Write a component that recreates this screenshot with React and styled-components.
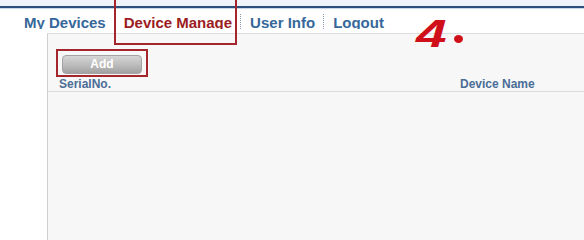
import styled, { createGlobalStyle } from 'styled-components';

const GlobalStyle = createGlobalStyle`
    html, body {
        margin: 0;
        padding: 0;
        background: #fff;
        font-family: 'Liberation Sans', Arial, sans-serif;
    }
    #root {
        height: 240px;
        overflow: hidden;
    }
`;

const Page = styled.div`
    position: relative;
    height: 240px;
    display: flex;
    flex-direction: column;
`;

const TopStrip = styled.div`
    height: 6px;
    background-color: #eef4f9;
    border-bottom: 2px solid #2c4f7e;
    box-shadow: 0 1px 0 #c9d7e5;
`;

const NavBar = styled.ul`
    list-style: none;
    margin: 6px 0 0 15px;
    padding: 0;
    display: flex;
    height: 15px;
    overflow: hidden;
`;

const NavItem = styled.li`
    padding: 0 8px 0 9px;
    font-size: 15px;
    font-weight: bold;
    line-height: 17px;
    color: ${props => (props.active ? '#9b1c22' : '#36679a')};
    border-left: ${props => (props.first ? 'none' : '1px dotted #8a9aac')};
    white-space: nowrap;
`;

const Panel = styled.div`
    flex: 1;
    margin: 4px 0 0 47px;
    background-color: #f7f7f7;
    border-left: 1px solid #cfcfcf;
    border-top: 1px solid #dedede;
`;

const Toolbar = styled.div`
    padding: 15px 0 0 8px;
    display: flex;
`;

const Highlight = styled.div`
    border: 2px solid #a4252b;
    padding: 3px 4px 1px 4px;
`;

const AddButton = styled.button`
    width: 80px;
    height: 19px;
    border: 1px solid #a3a3a3;
    border-radius: 4px;
    background: linear-gradient(#d6d6d6 0%, #bdbdbd 50%, #a2a2a2 100%);
    color: #fff;
    font-family: 'Liberation Sans', Arial, sans-serif;
    font-size: 12px;
    font-weight: bold;
    padding: 0;
    line-height: 17px;
`;

const HeaderRow = styled.div`
    display: grid;
    grid-template-columns: 401px 1fr;
    padding-left: 11px;
    height: 14px;
    border-bottom: 1px solid #dadada;
`;

const HeaderCell = styled.div`
    font-size: 12px;
    font-weight: bold;
    line-height: 14px;
    color: #4a6d96;
    white-space: nowrap;
`;

const NavMark = styled.div`
    position: absolute;
    left: 114px;
    top: -2px;
    width: 119px;
    height: 43px;
    border: 2px solid #a4252b;
`;

const StepLabel = styled.div`
    position: absolute;
    left: 416px;
    top: 15px;
    display: flex;
    align-items: flex-end;
`;

const StepDigit = styled.span`
    display: inline-block;
    font-family: 'Liberation Sans', Arial, sans-serif;
    font-size: 38px;
    font-weight: bold;
    font-style: italic;
    line-height: 38px;
    color: #cf1019;
    transform: scaleX(1.45);
    transform-origin: left center;
    margin-right: 17px;
`;

const StepDot = styled.span`
    width: 9px;
    height: 8px;
    border-radius: 50%;
    background-color: #cf1019;
    margin-bottom: 10px;
`;

const App = () => {
    const tabs = ['My Devices', 'Device Manage', 'User Info', 'Logout'];

    return (
        <Page>
            <GlobalStyle />
            <TopStrip />
            <NavBar>
                {tabs.map((tab, i) => (
                    <NavItem key={tab} first={i === 0} active={tab === 'Device Manage'}>
                        {tab}
                    </NavItem>
                ))}
            </NavBar>
            <Panel>
                <Toolbar>
                    <Highlight>
                        <AddButton>Add</AddButton>
                    </Highlight>
                </Toolbar>
                <HeaderRow>
                    <HeaderCell>SerialNo.</HeaderCell>
                    <HeaderCell>Device Name</HeaderCell>
                </HeaderRow>
            </Panel>
            <NavMark />
            <StepLabel>
                <StepDigit>4</StepDigit>
                <StepDot />
            </StepLabel>
        </Page>
    );
};

export default App;
